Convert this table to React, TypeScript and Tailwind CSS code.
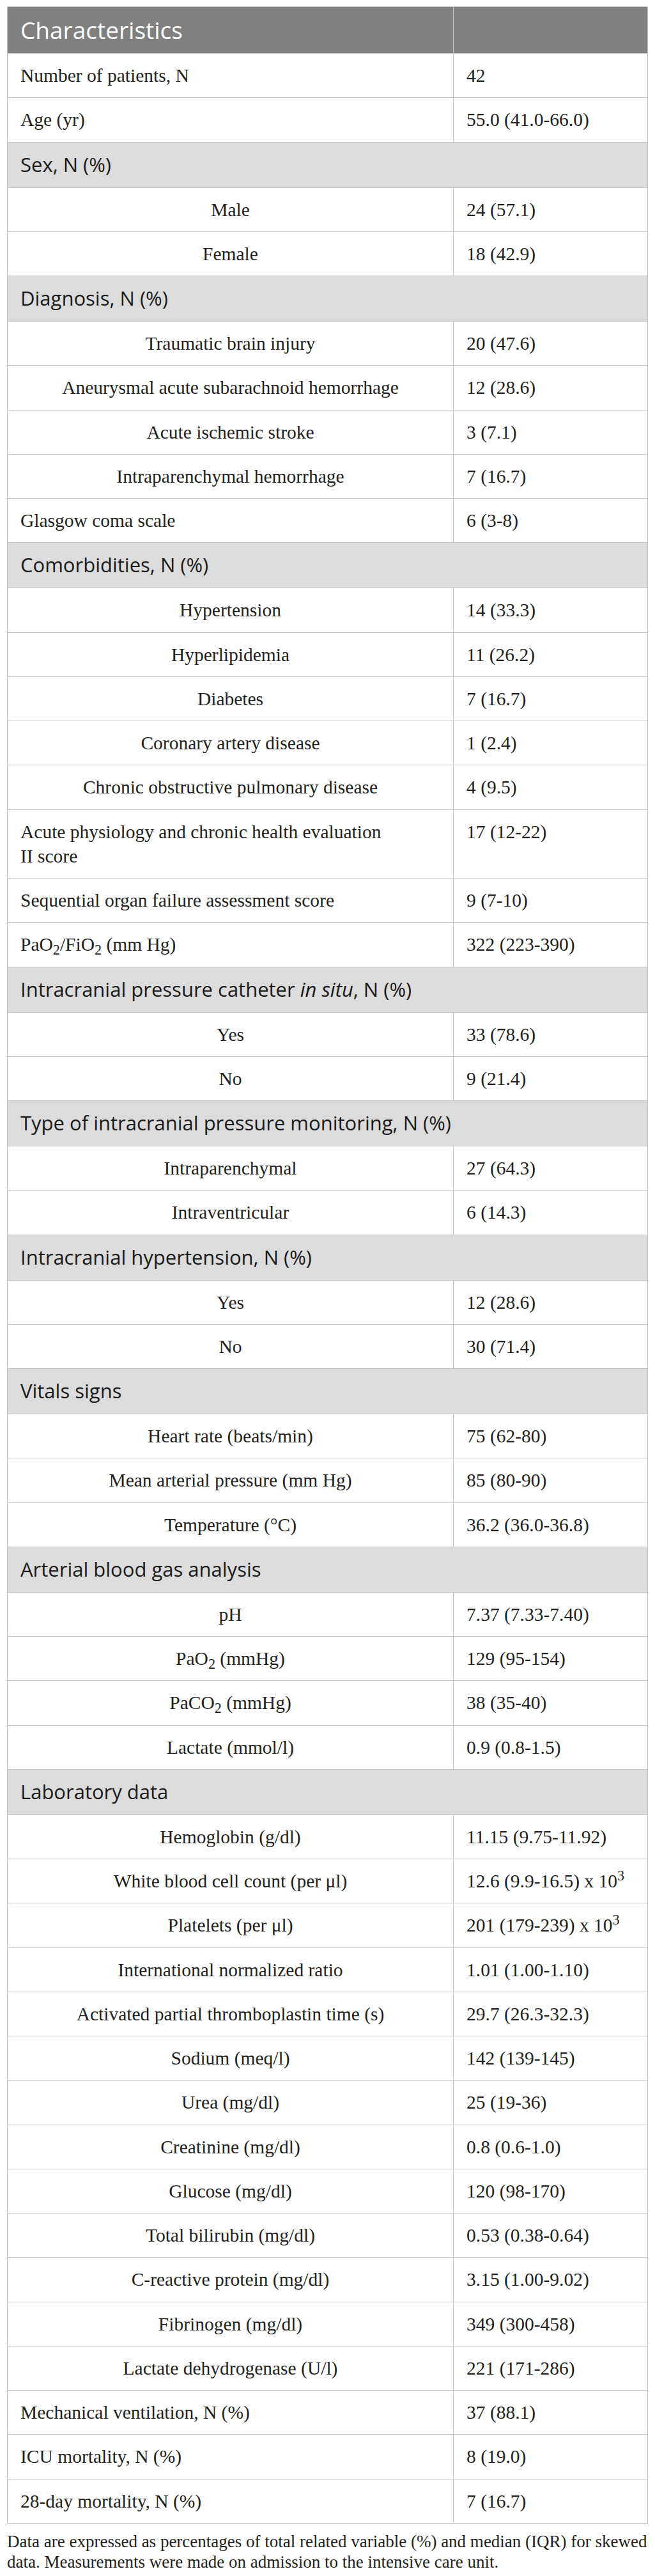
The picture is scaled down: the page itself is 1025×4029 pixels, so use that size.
import React from "react";

type Row =
  | { kind: "row"; label: React.ReactNode; value: React.ReactNode; center?: boolean }
  | { kind: "section"; label: React.ReactNode };

const rows: Row[] = [
  { kind: "row", label: "Number of patients, N", value: "42" },
  { kind: "row", label: "Age (yr)", value: "55.0 (41.0-66.0)" },
  { kind: "section", label: "Sex, N (%)" },
  { kind: "row", label: "Male", value: "24 (57.1)", center: true },
  { kind: "row", label: "Female", value: "18 (42.9)", center: true },
  { kind: "section", label: "Diagnosis, N (%)" },
  { kind: "row", label: "Traumatic brain injury", value: "20 (47.6)", center: true },
  { kind: "row", label: "Aneurysmal acute subarachnoid hemorrhage", value: "12 (28.6)", center: true },
  { kind: "row", label: "Acute ischemic stroke", value: "3 (7.1)", center: true },
  { kind: "row", label: "Intraparenchymal hemorrhage", value: "7 (16.7)", center: true },
  { kind: "row", label: "Glasgow coma scale", value: "6 (3-8)" },
  { kind: "section", label: "Comorbidities, N (%)" },
  { kind: "row", label: "Hypertension", value: "14 (33.3)", center: true },
  { kind: "row", label: "Hyperlipidemia", value: "11 (26.2)", center: true },
  { kind: "row", label: "Diabetes", value: "7 (16.7)", center: true },
  { kind: "row", label: "Coronary artery disease", value: "1 (2.4)", center: true },
  { kind: "row", label: "Chronic obstructive pulmonary disease", value: "4 (9.5)", center: true },
  {
    kind: "row",
    label: (
      <>
        Acute physiology and chronic health evaluation
        <br />
        II score
      </>
    ),
    value: "17 (12-22)",
  },
  { kind: "row", label: "Sequential organ failure assessment score", value: "9 (7-10)" },
  {
    kind: "row",
    label: (
      <>
        PaO<sub>2</sub>/FiO<sub>2</sub> (mm Hg)
      </>
    ),
    value: "322 (223-390)",
  },
  {
    kind: "section",
    label: (
      <>
        Intracranial pressure catheter <i>in situ</i>, N (%)
      </>
    ),
  },
  { kind: "row", label: "Yes", value: "33 (78.6)", center: true },
  { kind: "row", label: "No", value: "9 (21.4)", center: true },
  { kind: "section", label: "Type of intracranial pressure monitoring, N (%)" },
  { kind: "row", label: "Intraparenchymal", value: "27 (64.3)", center: true },
  { kind: "row", label: "Intraventricular", value: "6 (14.3)", center: true },
  { kind: "section", label: "Intracranial hypertension, N (%)" },
  { kind: "row", label: "Yes", value: "12 (28.6)", center: true },
  { kind: "row", label: "No", value: "30 (71.4)", center: true },
  { kind: "section", label: "Vitals signs" },
  { kind: "row", label: "Heart rate (beats/min)", value: "75 (62-80)", center: true },
  { kind: "row", label: "Mean arterial pressure (mm Hg)", value: "85 (80-90)", center: true },
  { kind: "row", label: "Temperature (°C)", value: "36.2 (36.0-36.8)", center: true },
  { kind: "section", label: "Arterial blood gas analysis" },
  { kind: "row", label: "pH", value: "7.37 (7.33-7.40)", center: true },
  {
    kind: "row",
    label: (
      <>
        PaO<sub>2</sub> (mmHg)
      </>
    ),
    value: "129 (95-154)",
    center: true,
  },
  {
    kind: "row",
    label: (
      <>
        PaCO<sub>2</sub> (mmHg)
      </>
    ),
    value: "38 (35-40)",
    center: true,
  },
  { kind: "row", label: "Lactate (mmol/l)", value: "0.9 (0.8-1.5)", center: true },
  { kind: "section", label: "Laboratory data" },
  { kind: "row", label: "Hemoglobin (g/dl)", value: "11.15 (9.75-11.92)", center: true },
  {
    kind: "row",
    label: "White blood cell count (per μl)",
    value: (
      <>
        12.6 (9.9-16.5) x 10<sup>3</sup>
      </>
    ),
    center: true,
  },
  {
    kind: "row",
    label: "Platelets (per μl)",
    value: (
      <>
        201 (179-239) x 10<sup>3</sup>
      </>
    ),
    center: true,
  },
  { kind: "row", label: "International normalized ratio", value: "1.01 (1.00-1.10)", center: true },
  { kind: "row", label: "Activated partial thromboplastin time (s)", value: "29.7 (26.3-32.3)", center: true },
  { kind: "row", label: "Sodium (meq/l)", value: "142 (139-145)", center: true },
  { kind: "row", label: "Urea (mg/dl)", value: "25 (19-36)", center: true },
  { kind: "row", label: "Creatinine (mg/dl)", value: "0.8 (0.6-1.0)", center: true },
  { kind: "row", label: "Glucose (mg/dl)", value: "120 (98-170)", center: true },
  { kind: "row", label: "Total bilirubin (mg/dl)", value: "0.53 (0.38-0.64)", center: true },
  { kind: "row", label: "C-reactive protein (mg/dl)", value: "3.15 (1.00-9.02)", center: true },
  { kind: "row", label: "Fibrinogen (mg/dl)", value: "349 (300-458)", center: true },
  { kind: "row", label: "Lactate dehydrogenase (U/l)", value: "221 (171-286)", center: true },
  { kind: "row", label: "Mechanical ventilation, N (%)", value: "37 (88.1)" },
  { kind: "row", label: "ICU mortality, N (%)", value: "8 (19.0)" },
  { kind: "row", label: "28-day mortality, N (%)", value: "7 (16.7)" },
];

const cell =
  "border border-[#c4c4c4] px-[20px] py-[15px] align-top text-[29.5px] leading-[38.25px] text-[#231f20] font-['Liberation_Serif',serif]";

export default function App() {
  return (
    <div className="bg-white pt-[10px] pl-[11px] pb-[4px]">
      <table className="border-collapse table-fixed w-[1003px]">
        <colgroup>
          <col className="w-[698px]" />
          <col />
        </colgroup>
        <thead>
          <tr>
            <th className="border border-[#c4c4c4] bg-[#808080] px-[20px] py-[15px] text-left align-top text-[37px] leading-[42px] font-normal text-white font-['Open_Sans',sans-serif]">
              Characteristics
            </th>
            <th className="border border-[#c4c4c4] bg-[#808080]" />
          </tr>
        </thead>
        <tbody>
          {rows.map((r, i) =>
            r.kind === "section" ? (
              <tr key={i}>
                <td
                  colSpan={2}
                  className="border border-[#c4c4c4] bg-[#dcdcdc] px-[20px] pt-[14px] pb-[16px] text-left align-top text-[31px] leading-[40px] text-[#1a1a1a] font-['Open_Sans',sans-serif]"
                >
                  {r.label}
                </td>
              </tr>
            ) : (
              <tr key={i}>
                <td className={`${cell} ${r.center ? "text-center" : "text-left"}`}>{r.label}</td>
                <td className={`${cell} text-left`}>{r.value}</td>
              </tr>
            )
          )}
        </tbody>
      </table>
      <p className="mt-[12px] w-[1014px] text-[27px] leading-[32px] text-[#231f20] font-['Liberation_Serif',serif]">
        Data are expressed as percentages of total related variable (%) and median (IQR) for skewed data.
        Measurements were made on admission to the intensive care unit.
      </p>
    </div>
  );
}
